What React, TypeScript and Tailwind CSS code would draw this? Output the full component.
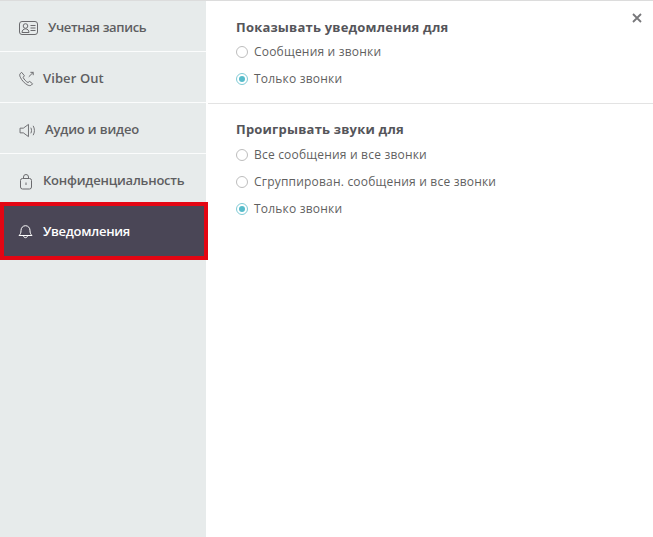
import React from "react";

const stroke = "#6b6b6e";

function IdIcon() {
  return (
    <svg width="20" height="16" viewBox="0 0 20 16" fill="none" stroke={stroke} strokeWidth="1">
      <rect x="0.5" y="1.5" width="18" height="13" rx="2.5" />
      <circle cx="6.5" cy="6" r="2.3" />
      <path d="M3 12.5c0-2.2 1.5-3.6 3.5-3.6s3.5 1.4 3.5 3.6z" />
      <path d="M11.5 5.5h5M11.5 8h5M11.5 10.5h5" />
    </svg>
  );
}
function PhoneIcon() {
  return (
    <svg width="16" height="16" viewBox="0 0 18 18" fill="none" stroke={stroke} strokeWidth="1.100">
      <path d="M3 1.500 1.300 3c-.8.9-.6 2.400.2 4 1.700 3.700 4.600 6.800 8.300 8.800 1.500.8 3 .9 4 .1l1.500-1.500-3.300-2.700-1.900 1.300C8 12 5.700 9.500 4.700 7.300L6 5.300z" />
      <path d="M11 6.500 16 1.500M12.800 1.500H16v3.200" />
    </svg>
  );
}
function SpeakerIcon() {
  return (
    <svg width="18" height="15" viewBox="0 0 19 16" fill="none" stroke={stroke} strokeWidth="1">
      <path d="M1 5.500h3.500L10 1.500v13l-5.500-4H1z" />
      <path d="M12.500 5c1 1.800 1 4.200 0 6M15 3c1.800 3 1.800 7 0 10" />
    </svg>
  );
}
function LockIcon() {
  return (
    <svg width="14" height="17" viewBox="0 0 14 17" fill="none" stroke={stroke} strokeWidth="1">
      <rect x="1.500" y="5.500" width="11" height="10.500" rx="2" />
      <path d="M4.500 5.500V4a2.500 2.500 0 0 1 5 0v1.500" />
      <path d="M7 9.500v2.500" />
    </svg>
  );
}
function BellIcon() {
  return (
    <svg width="15" height="15" viewBox="0 0 15 15" fill="none" stroke="#ffffff" strokeWidth="1" className="-mt-[2px]">
      <path d="M1 11.500c1.400-1.400 2-2.500 2-5 0-2.600 1.800-4.800 4.500-4.800S12 3.900 12 6.500c0 2.500.6 3.600 2 5z" />
      <path d="M5.500 11.500c0 1.300.9 2.200 2 2.200s2-.9 2-2.200" />
    </svg>
  );
}

function NavRow({ icon, label, cls }: { icon: React.ReactNode; label: string; cls: string }) {
  return (
    <div className={`flex items-center pl-[19px] text-[13px] font-semibold text-[#5e5e61] ${cls}`}>
      {icon}
      <span>{label}</span>
    </div>
  );
}

function Radio({ label, checked = false }: { label: string; checked?: boolean }) {
  return (
    <div className="flex h-[27px] items-center gap-[6px] text-[12px] tracking-[0.2px] text-[#5f5f5f]">
      {checked ? (
        <span className="flex h-3 w-3 items-center justify-center rounded-full border border-[#7fcbd6] bg-white">
          <span className="h-[6px] w-[6px] rounded-full bg-[#57bccb]" />
        </span>
      ) : (
        <span className="h-3 w-3 rounded-full border border-[#bdbdbd] bg-white" />
      )}
      <span>{label}</span>
    </div>
  );
}

export default function App() {
  return (
    <div className="flex h-[537px] w-[653px] border-t border-[#dcdcdc] bg-white font-['Open_Sans',sans-serif]">
      <aside className="w-[206px] shrink-0 bg-[#e7ebeb]">
        <NavRow icon={<IdIcon />} label="Учетная запись" cls="h-[51px] gap-[9px] pt-[4px] tracking-[-0.35px] border-b border-[#fbfcfc]" />
        <NavRow icon={<PhoneIcon />} label="Viber Out" cls="h-[51px] gap-[8px] pt-[4px] tracking-[0.1px] border-b border-[#fbfcfc]" />
        <NavRow icon={<SpeakerIcon />} label="Аудио и видео" cls="h-[51px] gap-[8px] pt-[4px] tracking-[-0.15px] border-b border-[#fbfcfc]" />
        <NavRow icon={<LockIcon />} label="Конфиденциальность" cls="h-[48px] gap-[10px] pt-[6px] tracking-[-0.22px]" />
        <div className="mr-[-2px] flex h-[58px] items-center gap-[10px] border-4 border-[#e30613] bg-[#4a4656] pl-[14px] pt-[2px] text-[13px] font-semibold tracking-[-0.27px] text-white">
          <BellIcon />
          <span>Уведомления</span>
        </div>
      </aside>
      <main className="relative flex-1 pl-[2px]">
        <section className="border-b border-[#e3e3e3] pb-[11px] pl-[28px] pt-[17px]">
          <h2 className="mb-[2px] text-[13px] leading-[18px] font-bold tracking-[0.2px] text-[#55555a]">Показывать уведомления для</h2>
          <Radio label="Сообщения и звонки" />
          <Radio label="Только звонки" checked />
        </section>
        <section className="pl-[28px] pt-[16px]">
          <h2 className="mb-[3px] text-[13px] leading-[18px] font-bold tracking-[0.2px] text-[#55555a]">Проигрывать звуки для</h2>
          <Radio label="Все сообщения и все звонки" />
          <Radio label="Сгруппирован. сообщения и все звонки" />
          <Radio label="Только звонки" checked />
        </section>
        <svg className="absolute right-[11px] top-[12px]" width="10" height="10" viewBox="0 0 10 10" stroke="#77777a" strokeWidth="1.800">
          <path d="M1 1l8 8M9 1l-8 8" />
        </svg>
      </main>
    </div>
  );
}
